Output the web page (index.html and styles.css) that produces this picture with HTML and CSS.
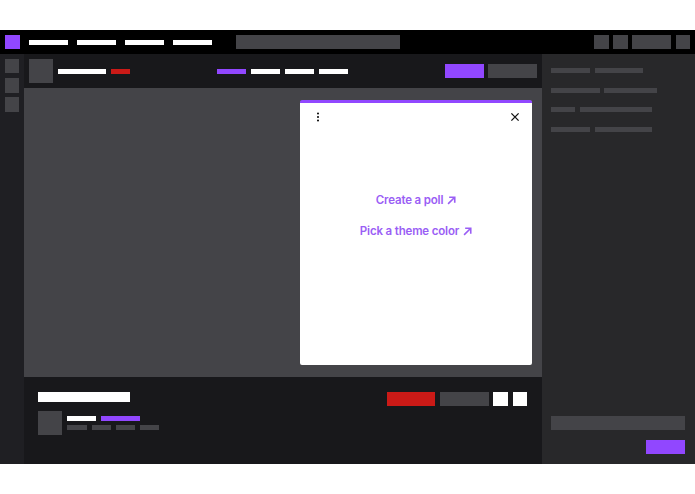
FILE: index.html
```html
<!DOCTYPE html>
<html lang="en">
<head>
<meta charset="utf-8">
<title>Stream layout</title>
<link rel="stylesheet" href="styles.css">
</head>
<body>
<div class="app">
  <header class="topbar">
    <div class="topbar-left">
      <span class="sq purple"></span>
      <nav class="nav">
        <span class="bar w39 white"></span>
        <span class="bar w39 white"></span>
        <span class="bar w39 white"></span>
        <span class="bar w39 white"></span>
      </nav>
      <span class="search"></span>
    </div>
    <div class="topbar-right">
      <span class="sq grey"></span>
      <span class="sq grey"></span>
      <span class="btn w39 grey"></span>
      <span class="sq grey"></span>
    </div>
  </header>
  <div class="body">
    <aside class="rail">
      <span class="sq grey"></span>
      <span class="sq grey"></span>
      <span class="sq grey"></span>
    </aside>
    <main class="main">
      <section class="channel">
        <div class="channel-id">
          <span class="avatar"></span>
          <span class="bar w48 white"></span>
          <span class="bar w19 red"></span>
        </div>
        <div class="tabs">
          <span class="bar w29 purple"></span>
          <span class="bar w29 white"></span>
          <span class="bar w29 white"></span>
          <span class="bar w29 white"></span>
        </div>
        <div class="channel-actions">
          <span class="btn w39 purple"></span>
          <span class="btn w49 grey"></span>
        </div>
      </section>
      <section class="stage">
        <div class="panel">
          <div class="panel-head">
            <svg class="icon" viewBox="0 0 10 10" aria-hidden="true"><circle cx="5" cy="1.6" r="1"/><circle cx="5" cy="5" r="1"/><circle cx="5" cy="8.4" r="1"/></svg>
            <svg class="icon" viewBox="0 0 10 10" aria-hidden="true"><path d="M1.4 1.4l7.2 7.2M8.6 1.4l-7.2 7.2" fill="none" stroke="#111" stroke-width="1.3"/></svg>
          </div>
          <div class="panel-links">
            <a class="link">Create a poll <svg class="arrow" viewBox="0 0 10 10" aria-hidden="true"><path d="M1.2 8.8L8 2M2.4 1.4h6.2v6.2" fill="none" stroke="currentColor" stroke-width="1.8"/></svg></a>
            <a class="link">Pick a theme color <svg class="arrow" viewBox="0 0 10 10" aria-hidden="true"><path d="M1.2 8.8L8 2M2.4 1.4h6.2v6.2" fill="none" stroke="currentColor" stroke-width="1.8"/></svg></a>
          </div>
        </div>
      </section>
      <section class="info">
        <div class="info-left">
          <span class="title"></span>
          <div class="owner">
            <span class="avatar"></span>
            <div class="owner-text">
              <div class="owner-line">
                <span class="bar w29 white"></span>
                <span class="bar w39 purple"></span>
              </div>
              <div class="owner-line meta">
                <span class="bar w19 grey"></span>
                <span class="bar w19 grey"></span>
                <span class="bar w19 grey"></span>
                <span class="bar w19 grey"></span>
              </div>
            </div>
          </div>
        </div>
        <div class="info-actions">
          <span class="btn w48 red"></span>
          <span class="btn w48 grey"></span>
          <span class="sq white"></span>
          <span class="sq white"></span>
        </div>
      </section>
    </main>
    <aside class="chat">
      <div class="chat-lines">
        <div class="chat-line"><span class="bar w39 grey"></span><span class="bar w48 grey"></span></div>
        <div class="chat-line"><span class="bar w48 grey"></span><span class="bar w53 grey"></span></div>
        <div class="chat-line"><span class="bar w24 grey"></span><span class="bar w72 grey"></span></div>
        <div class="chat-line"><span class="bar w39 grey"></span><span class="bar w57 grey"></span></div>
      </div>
      <div class="chat-form">
        <span class="chat-input"></span>
        <span class="btn w39 purple"></span>
      </div>
    </aside>
  </div>
</div>
</body>
</html>
```
FILE: styles.css
```css
* { box-sizing: border-box; }
html, body { margin: 0; background: #fff; }
body { font-family: Inter, "Liberation Sans", sans-serif; }
span { display: block; flex: none; }

.app { margin-top: 30px; height: 434px; display: flex; flex-direction: column; }

.white { background: #fff; }
.grey { background: #444448; }
.purple { background: #9147ff; }
.red { background: #cb1a17; }

.sq { width: 14.5px; height: 14.5px; }
.bar { height: 5px; }
.btn { height: 14.5px; }
.w19 { width: 19.25px; }
.w24 { width: 24px; }
.w29 { width: 29px; }
.w39 { width: 39px; }
.w48 { width: 48.5px; }
.w49 { width: 49px; }
.w53 { width: 53px; }
.w57 { width: 57px; }
.w72 { width: 72px; }

.topbar { height: 24px; flex: none; background: #000; display: flex; align-items: center; justify-content: space-between; padding: 0 5px; }
.topbar-left { display: flex; align-items: center; }
.topbar-right { display: flex; align-items: center; gap: 4.5px; }
.nav { display: flex; gap: 9.1px; margin-left: 9.5px; }
.search { width: 164px; height: 14.5px; background: #444448; margin-left: 24.2px; }

.body { flex: 1; display: flex; min-height: 0; }

.rail { width: 24px; flex: none; background: #1f1f23; display: flex; flex-direction: column; align-items: center; gap: 4.75px; padding-top: 4.75px; }

.main { flex: 1; min-width: 0; display: flex; flex-direction: column; }

.channel { height: 34px; flex: none; background: #18181b; display: flex; align-items: center; padding: 0 5px; position: relative; }
.avatar { width: 24px; height: 24px; background: #444448; }
.channel-id { display: flex; align-items: center; gap: 4.75px; }
.tabs { display: flex; gap: 4.75px; margin-left: 87px; }
.channel-actions { display: flex; gap: 4.5px; margin-left: auto; }

.stage { flex: 1; min-height: 0; background: #444448; padding: 12px 10px 12px 0; display: flex; justify-content: flex-end; }
.panel { width: 232px; background: #fff; border-top: 3px solid #9147ff; border-radius: 2px; display: flex; flex-direction: column; }
.panel-head { display: flex; justify-content: space-between; padding: 9px 12.5px 0 12.5px; }
.icon { width: 10px; height: 10px; display: block; }
.panel-links { display: flex; flex-direction: column; align-items: center; gap: 15px; margin-top: 70px; }
.link { font-size: 11.5px; letter-spacing: -0.17px; line-height: 16px; font-weight: 600; color: #9a5ef5; display: flex; align-items: center; gap: 4px; }
.arrow { width: 9px; height: 9px; display: block; }

.info { height: 87px; flex: none; background: #18181b; display: flex; justify-content: space-between; padding: 14.5px 15px 0 14.25px; }
.title { width: 91.75px; height: 10px; background: #fff; }
.owner { display: flex; gap: 5px; margin-top: 9.5px; }
.owner-text { display: flex; flex-direction: column; gap: 4.5px; padding-top: 4.5px; }
.owner-line { display: flex; gap: 4.75px; }
.owner-line.meta { gap: 5px; }
.info-actions { display: flex; gap: 4.75px; }

.chat { width: 153px; flex: none; background: #28282a; display: flex; flex-direction: column; justify-content: space-between; padding: 14px 10px 10px 9px; }
.chat-lines { display: flex; flex-direction: column; gap: 14.5px; }
.chat-line { display: flex; gap: 4.75px; }
.chat-form { display: flex; flex-direction: column; align-items: flex-end; gap: 9.5px; }
.chat-input { width: 134px; height: 14.5px; background: #444448; }
```
